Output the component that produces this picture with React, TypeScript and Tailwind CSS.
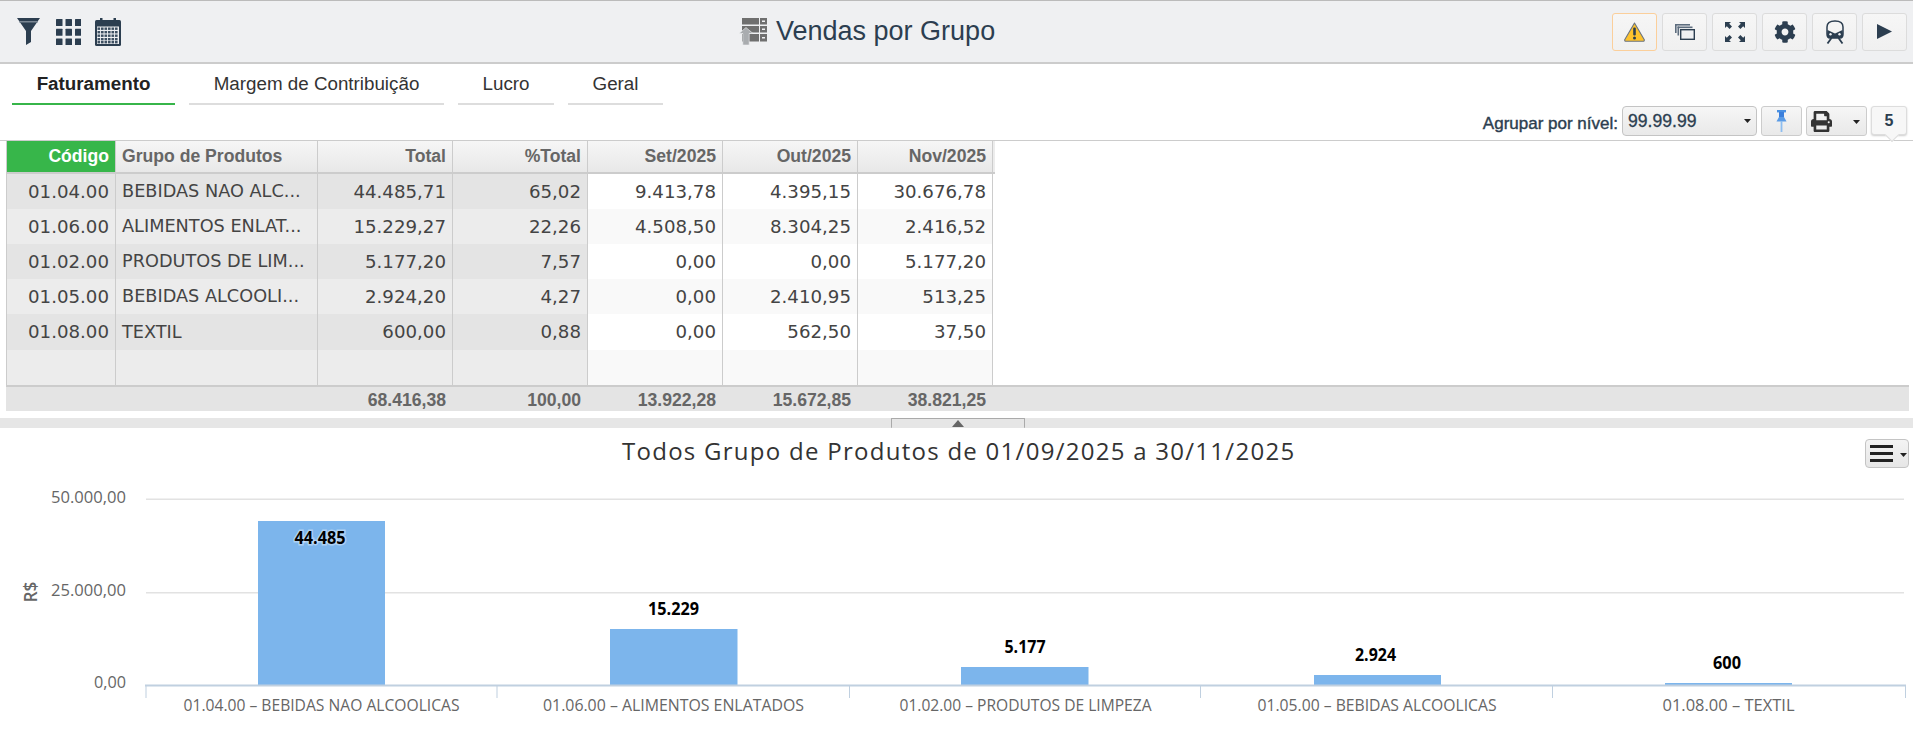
import { FaCog, FaPrint } from "react-icons/fa";

const SANS = "font-['Liberation_Sans',Arial,sans-serif]";

const rows = [
  ["01.04.00", "BEBIDAS NAO ALC...", "44.485,71", "65,02", "9.413,78", "4.395,15", "30.676,78"],
  ["01.06.00", "ALIMENTOS ENLAT...", "15.229,27", "22,26", "4.508,50", "8.304,25", "2.416,52"],
  ["01.02.00", "PRODUTOS DE LIM...", "5.177,20", "7,57", "0,00", "0,00", "5.177,20"],
  ["01.05.00", "BEBIDAS ALCOOLI...", "2.924,20", "4,27", "0,00", "2.410,95", "513,25"],
  ["01.08.00", "TEXTIL", "600,00", "0,88", "0,00", "562,50", "37,50"],
  ["", "", "", "", "", "", ""],
];
const heads = ["Código", "Grupo de Produtos", "Total", "%Total", "Set/2025", "Out/2025", "Nov/2025"];
const foot = ["", "", "68.416,38", "100,00", "13.922,28", "15.672,85", "38.821,25"];
const tabs = [
  ["Faturamento", "w-[163px]", true],
  ["Margem de Contribuição", "w-[255px]", false],
  ["Lucro", "w-[96px]", false],
  ["Geral", "w-[95px]", false],
] as const;

const DARK = "#2c3e50";

function Funnel() {
  return (
    <svg width="23" height="27" viewBox="0 0 23 27">
      <polygon points="0,0 23,0 14,13 14,24 9,27 9,13" fill={DARK} />
      <rect x="2" y="3" width="19" height="1.5" fill="#7b8794" />
    </svg>
  );
}
function Grid3() {
  const c = [0, 9.5, 19];
  return (
    <svg width="25" height="26" viewBox="0 0 25 26">
      {c.map((x) => c.map((y) => <rect key={`${x}-${y}`} x={x} y={y * 1.03} width="6.5" height="7" rx="0.5" fill={DARK} />))}
    </svg>
  );
}
function Calendar() {
  const xs = [3.5, 7, 10.5, 14, 17.5, 21];
  const ys = [10.5, 14, 17.5, 21, 24];
  return (
    <svg width="26" height="28" viewBox="0 0 26 28">
      <rect x="0" y="2" width="26" height="26" rx="1.5" fill={DARK} />
      <rect x="5" y="0" width="2.5" height="4" fill={DARK} />
      <rect x="18.5" y="0" width="2.5" height="4" fill={DARK} />
      <rect x="2" y="8.5" width="22" height="17.5" fill="#eff0f2" />
      {xs.map((x) => ys.map((y) => <rect key={`${x}-${y}`} x={x - 1} y={y - 1} width="2.6" height="2.4" fill="#3d4f61" />))}
    </svg>
  );
}
function Warning() {
  return (
    <svg width="21" height="20" viewBox="0 0 21 20">
      <path d="M10.5 1 L20.3 17.8 Q20.5 19.2 19.2 19.2 L1.8 19.2 Q0.5 19.2 0.7 17.8 Z" fill="#fdc22d" stroke="#6b7480" strokeWidth="1.1" strokeLinejoin="round" />
      <rect x="9.2" y="5.5" width="2.6" height="8" rx="1" fill="#2c3e50" />
      <circle cx="10.5" cy="16" r="1.5" fill="#2c3e50" />
    </svg>
  );
}
function Layers() {
  return (
    <svg width="20" height="16" viewBox="0 0 20 16">
      <rect x="0" y="0" width="15" height="1.6" fill="#5d6d7e" />
      <rect x="0" y="0" width="1.6" height="9" fill="#5d6d7e" />
      <rect x="2.5" y="2.5" width="15" height="1.6" fill="#5d6d7e" />
      <rect x="2.5" y="2.5" width="1.6" height="9" fill="#5d6d7e" />
      <rect x="5.7" y="5.7" width="13.6" height="9.6" fill="#eff0f2" stroke={DARK} strokeWidth="1.4" />
    </svg>
  );
}
function Expand() {
  return (
    <svg width="20" height="20" viewBox="0 0 20 20" fill={DARK}>
      <path d="M0 0 H6 L4.2 1.8 L7 4.6 L4.6 7 L1.8 4.2 L0 6 Z" />
      <path d="M20 0 H14 L15.8 1.8 L13 4.6 L15.4 7 L18.2 4.2 L20 6 Z" />
      <path d="M0 20 H6 L4.2 18.2 L7 15.4 L4.6 13 L1.8 15.8 L0 14 Z" />
      <path d="M20 20 H14 L15.8 18.2 L13 15.4 L15.4 13 L18.2 15.8 L20 14 Z" />
    </svg>
  );
}
function Train() {
  return (
    <svg width="20" height="24" viewBox="0 0 20 24" fill="none" stroke={DARK} strokeWidth="1.5">
      <path d="M2 14 V7 Q2 1 10 1 Q18 1 18 7 V14 Q18 18 15 18 H5 Q2 18 2 14 Z" />
      <path d="M2.5 10 L10 13.5 L17.5 10 L18 15 Q18 18 15 18 H5 Q2 18 2 15 Z" fill={DARK} stroke="none" />
      <circle cx="5.5" cy="14.2" r="1.2" fill="#eff0f2" stroke="none" />
      <circle cx="14.5" cy="14.2" r="1.2" fill="#eff0f2" stroke="none" />
      <path d="M6.5 18 L2.5 23.5 M13.5 18 L17.5 23.5" strokeWidth="1.8" />
    </svg>
  );
}
function Play() {
  return (
    <svg width="15" height="15" viewBox="0 0 15 15">
      <polygon points="0,0 15,7.5 0,15" fill={DARK} />
    </svg>
  );
}
function Pin() {
  return (
    <svg width="11" height="22" viewBox="0 0 11 22">
      <rect x="1" y="0" width="9" height="2.4" fill="#4a90e2" />
      <rect x="3" y="2" width="5" height="6" fill="#3b7fdc" />
      <polygon points="3,7 8,7 10.5,11.5 0.5,11.5" fill="#5a9be6" />
      <rect x="4.6" y="11" width="1.8" height="11" fill="#8dbdf0" />
    </svg>
  );
}
function TitleIcon() {
  return (
    <svg width="28" height="27" viewBox="0 0 28 27">
      <rect x="3" y="0" width="17" height="6.5" fill="#6f6f6f" />
      <rect x="21" y="0" width="7" height="6.5" fill="#6f6f6f" />
      <rect x="3" y="8" width="17" height="6.5" fill="#6f6f6f" />
      <rect x="21" y="8" width="7" height="6.5" fill="#6f6f6f" />
      <rect x="3" y="16" width="17" height="7.5" fill="#6f6f6f" />
      <rect x="21" y="16" width="7" height="7.5" fill="#6f6f6f" />
      <rect x="23" y="2.5" width="3" height="1.5" fill="#eff0f2" />
      <rect x="23" y="10.5" width="3" height="1.5" fill="#eff0f2" />
      <rect x="23" y="19" width="3" height="1.5" fill="#eff0f2" />
      <polygon points="0,15.5 7,9.5 14,15.5 10.2,15.5 10.2,27 3.8,27 3.8,15.5" fill="#a9acaf" stroke="#eff0f2" strokeWidth="0.6" />
    </svg>
  );
}
function Caret({ color = "#222" }: { color?: string }) {
  return (
    <svg width="7" height="4" viewBox="0 0 7 4">
      <polygon points="0,0 7,0 3.5,4" fill={color} />
    </svg>
  );
}

function TopButton({ children, warn }: { children: React.ReactNode; warn?: boolean }) {
  return (
    <button
      className={`flex h-[38px] w-[45px] items-center justify-center rounded-[3px] border bg-gradient-to-b from-[#f6f6f6] to-[#f0f0f0] ${
        warn ? "border-[#fbcf9b]" : "border-[#dcdcdc]"
      }`}
    >
      {children}
    </button>
  );
}

function Row({ cells, i }: { cells: string[]; i: number }) {
  const odd = i % 2 === 0 && i < 5;
  const heights = ["h-[35px]", "h-[35px]", "h-[35px]", "h-[35px]", "h-[36px]", "h-[35px]"];
  return (
    <div className="ml-[6px] grid w-fit grid-cols-[110px_202px_135px_135px_135px_135px_135px]">
      {cells.map((c, k) => (
        <div
          key={k}
          className={`${heights[i]} flex items-center overflow-hidden whitespace-nowrap border-r border-[#cccccc] font-['DejaVu_Sans',sans-serif] text-[#444444] ${
            k === 0 ? "border-l" : ""
          } ${k === 1 ? "justify-start pl-[6px] text-[17.7px]" : "justify-end pr-[6px] text-[18.2px]"} ${
            k < 4 ? (odd ? "bg-[#e4e4e4]" : "bg-[#ececec]") : odd ? "bg-white" : "bg-[#f9f9f9]"
          }`}
        >
          {c}
        </div>
      ))}
    </div>
  );
}

const bars = [
  { x: 258, w: 127, top: 521, label: "44.485", lx: 320, ly: 538, inside: true, lw: 51, axis: "01.04.00 – BEBIDAS NAO ALCOOLICAS", ax: 321.5, al: 276 },
  { x: 610, w: 127.5, top: 629, label: "15.229", lx: 673.5, ly: 609, inside: false, lw: 51, axis: "01.06.00 – ALIMENTOS ENLATADOS", ax: 673.5, al: 261 },
  { x: 961, w: 127.5, top: 667, label: "5.177", lx: 1025, ly: 647, inside: false, lw: 41, axis: "01.02.00 – PRODUTOS DE LIMPEZA", ax: 1025.5, al: 252 },
  { x: 1314, w: 127, top: 675, label: "2.924", lx: 1375.5, ly: 655, inside: false, lw: 41, axis: "01.05.00 – BEBIDAS ALCOOLICAS", ax: 1377, al: 239 },
  { x: 1665, w: 127, top: 683, label: "600", lx: 1727, ly: 663, inside: false, lw: 28, axis: "01.08.00 – TEXTIL", ax: 1728.5, al: 132 },
];
const OY = 428;

function Chart() {
  const y = (v: number) => v - OY;
  const font = "'Open Sans',sans-serif";
  return (
    <svg width="1913" height="317" viewBox="0 0 1913 317" className="block">
      {[498.5, 592].map((g) => (
        <rect key={g} x="146" y={y(g)} width="1758" height="1.5" fill="#e2e2e2" />
      ))}
      {bars.map((b) => (
        <rect key={b.x} x={b.x} y={y(b.top)} width={b.w} height={685 - b.top} fill="#7cb5ec" />
      ))}
      <rect x="145" y={y(684.5)} width="1761" height="2" fill="#c0d0e0" />
      {[145.5, 496.5, 849, 1200, 1552, 1905].map((t) => (
        <rect key={t} x={t} y={y(685)} width="1" height="13" fill="#c0d0e0" />
      ))}
      {[
        ["50.000,00", 497, 75],
        ["25.000,00", 590, 75],
        ["0,00", 682, 32],
      ].map(([t, ty, l]) => (
        <text
          key={t as string}
          x="126"
          y={y((ty as number) + 6)}
          textAnchor="end"
          textLength={l as number}
          lengthAdjust="spacingAndGlyphs"
          fontFamily={font}
          fontSize="17"
          fill="#666666"
        >
          {t}
        </text>
      ))}
      <text
        transform={`translate(37 ${y(592)}) rotate(-90)`}
        textAnchor="middle"
        fontFamily={font}
        fontSize="18"
        fontWeight="600"
        textLength={21}
        lengthAdjust="spacingAndGlyphs"
        fill="#666666"
      >
        R$
      </text>
      {bars.map((b) => (
        <text
          key={b.axis}
          x={b.ax}
          y={y(711)}
          textAnchor="middle"
          textLength={b.al}
          lengthAdjust="spacingAndGlyphs"
          fontFamily={font}
          fontSize="17"
          fill="#666666"
        >
          {b.axis}
        </text>
      ))}
      {bars.map((b) => (
        <text
          key={b.label}
          x={b.lx}
          y={y(b.ly + 6)}
          textAnchor="middle"
          textLength={b.lw}
          lengthAdjust="spacingAndGlyphs"
          fontFamily={font}
          fontSize="17"
          fontWeight="700"
          fill="#000000"
          stroke="#ffffff"
          strokeOpacity={b.inside ? 0.4 : 0.9}
          strokeWidth="3"
          paintOrder="stroke"
        >
          {b.label}
        </text>
      ))}
    </svg>
  );
}

export default function App() {
  return (
    <div className={`${SANS} h-[745px] w-[1913px] overflow-hidden bg-white`}>
      {/* top bar */}
      <header className="flex h-[64px] items-center border-t border-b-2 border-t-[#bbbbbb] border-b-[#cccccc] bg-[#eff0f2] pr-[6px]">
        <div className="flex w-[739px] shrink-0 items-center pl-[17px]">
          <Funnel />
          <span className="ml-[16px]"><Grid3 /></span>
          <span className="ml-[14px]"><Calendar /></span>
        </div>
        <div className="flex items-center gap-[9px] text-[27px] leading-none text-[#2c3e50]">
          <TitleIcon />
          <span className="-mt-px">Vendas por Grupo</span>
        </div>
        <div className="ml-auto flex gap-[5px]">
          <TopButton warn><Warning /></TopButton>
          <TopButton><Layers /></TopButton>
          <TopButton><Expand /></TopButton>
          <TopButton><FaCog size={22} color={DARK} /></TopButton>
          <TopButton><Train /></TopButton>
          <TopButton><Play /></TopButton>
        </div>
      </header>

      {/* tabs */}
      <nav className="flex h-[41px] gap-[14px] pl-[12px]">
        {tabs.map(([t, w, on]) => (
          <div
            key={t}
            className={`${w} flex items-center justify-center border-b-2 pt-px text-[18.8px] ${
              on ? "border-[#37b54a] font-bold text-[#222222]" : "border-[#dddddd] text-[#333333]"
            }`}
          >
            {t}
          </div>
        ))}
      </nav>

      {/* grouping toolbar */}
      <div className="flex h-[35px] items-start justify-end pr-[6px] pt-px">
        <span className="mr-[4px] mt-[8px] text-[17px] leading-5 text-[#2c3e50] [-webkit-text-stroke:0.4px_#2c3e50]">Agrupar por nível:</span>
        <div className="flex h-[30px] w-[135px] items-center justify-between rounded-[4px] border border-[#c4c4c4] bg-gradient-to-b from-[#f6f6f6] to-[#e9e9e9] pl-[5px] pr-[5px] text-[17.6px] text-[#2c3e50] [-webkit-text-stroke:0.3px_#2c3e50]">
          <span>99.99.99</span>
          <Caret />
        </div>
        <button className="ml-[4px] flex h-[30px] w-[41px] items-center justify-center rounded-[3px] border border-[#cccccc] bg-gradient-to-b from-[#f6f6f6] to-[#e9e9e9]">
          <Pin />
        </button>
        <button className="relative ml-[4px] flex h-[30px] w-[61px] items-center rounded-[3px] border border-[#cccccc] bg-gradient-to-b from-[#f6f6f6] to-[#e9e9e9] pl-[4px]">
          <FaPrint size={21} color="#333333" />
          <span className="absolute right-[6px] top-[13px] flex"><Caret /></span>
        </button>
        <div className="relative ml-[4px] flex h-[29px] w-[36px] items-center justify-center rounded-[3px] border border-[#dddddd] bg-[#f7f7f7] text-[16px] font-bold text-[#2c3e50] shadow-[0_1px_2px_rgba(0,0,0,0.2)]">
          <span className="relative z-10">5</span>
          <span className="absolute -bottom-[6px] left-[15px] h-[10px] w-[10px] rotate-45 border-b border-r border-[#dddddd] bg-[#f7f7f7]" />
        </div>
      </div>

      {/* table */}
      <section className="border-t border-[#cccccc]">
        <div className="ml-[6px] box-content flex h-[31px] w-[989px] items-stretch border-b-2 border-[#cccccc]">
          <div className="grid w-[989px] grid-cols-[110px_202px_135px_135px_135px_135px_135px_2px]">
            {heads.map((h, k) => (
              <div
                key={h}
                className={`flex items-center whitespace-nowrap border-r border-[#cccccc] text-[17.6px] font-bold ${
                  k === 0
                    ? "justify-end border-l bg-[#37b64a] pr-[6px] text-white"
                    : `bg-gradient-to-b from-[#f6f6f6] to-[#e8e8e8] text-[#666666] ${k === 1 ? "justify-start pl-[6px]" : "justify-end pr-[6px]"}`
                }`}
              >
                {h}
              </div>
            ))}
            <div className="bg-[#ececec]" />
          </div>
        </div>
        {rows.map((r, i) => (
          <Row key={i} cells={r} i={i} />
        ))}
        <div className="ml-[6px] mr-[4px] border-t-2 border-[#cccccc] bg-[#e4e4e4]">
          <div className="grid h-[24px] grid-cols-[110px_202px_135px_135px_135px_135px_135px]">
            {foot.map((f, k) => (
              <div key={k} className="flex items-center justify-end pr-[7px] text-[17.6px] font-bold text-[#666666]">
                {f}
              </div>
            ))}
          </div>
        </div>
      </section>

      {/* splitter */}
      <div className="mt-[7px] flex h-[10px] justify-center bg-[#e6e6e6]">
        <div className="ml-[2px] flex h-[10px] w-[134px] items-start justify-center rounded-[1px] border border-b-0 border-[#aaaaaa]">
          <svg width="12" height="7" viewBox="0 0 12 7" className="mt-[1px]">
            <polygon points="6,0 12,7 0,7" fill="#666666" />
          </svg>
        </div>
      </div>

      {/* chart */}
      <section className="relative">
        <h2 className="absolute left-[622px] top-[8px] w-[672px] whitespace-nowrap text-center font-['Open_Sans',sans-serif] text-[24px] font-normal leading-[30px] tracking-[1.27px] text-[#333333]">
          Todos Grupo de Produtos de 01/09/2025 a 30/11/2025
        </h2>
        <button className="absolute left-[1865px] top-[11px] flex h-[29px] w-[44px] items-center rounded-[4px] border border-[#c4c4c4] bg-gradient-to-b from-[#f4f4f4] to-[#e6e6e6] pl-[4px]">
          <span className="flex w-[23px] flex-col gap-[4px]">
            <span className="h-[3px] bg-[#222222]" />
            <span className="h-[3px] bg-[#222222]" />
            <span className="h-[3px] bg-[#222222]" />
          </span>
          <span className="ml-[7px] mt-[3px] flex"><Caret /></span>
        </button>
        <Chart />
      </section>
    </div>
  );
}
